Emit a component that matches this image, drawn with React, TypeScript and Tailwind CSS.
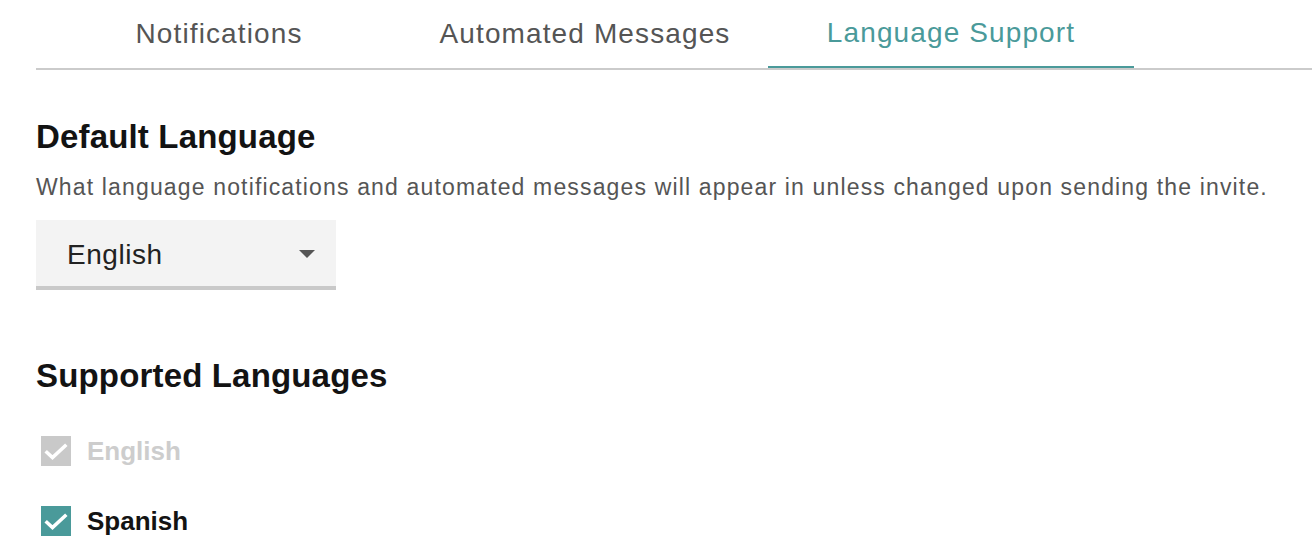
const tabs = ["Notifications", "Automated Messages", "Language Support"];

function Check({ disabled }: { disabled?: boolean }) {
  return (
    <span
      className={`flex h-[30px] w-[30px] shrink-0 ${
        disabled ? "bg-[#c9c9c9]" : "bg-[#4a9a9a]"
      }`}
    >
      <svg width="30" height="30" viewBox="0 0 30 30" fill="none">
        <path
          d="M6 16.5 L11.5 21.5 L24 10"
          stroke="#fff"
          strokeWidth="3.6"
          strokeLinecap="square"
        />
      </svg>
    </span>
  );
}

export default function App() {
  return (
    <div className="min-h-[554px] w-full bg-white font-['Liberation_Sans',Arial,sans-serif]">
      {/* tab bar */}
      <div className="ml-[36px] flex h-[70px] border-b-2 border-[#cbcbcb]">
        {tabs.map((t, i) => (
          <div
            key={t}
            className={`flex h-[68px] w-[366px] items-center justify-center pb-[1px] text-[28px] tracking-[0.04em] ${
              i === 2
                ? "border-b-2 border-[#4a9a9a] text-[#4a9a9a]"
                : "text-[#555]"
            }`}
          >
            {t}
          </div>
        ))}
      </div>

      <div className="px-[36px]">
        <h2 className="mt-[47px] text-[33px] font-bold leading-[40px] tracking-[0.005em] text-[#131313]">
          Default Language
        </h2>
        <p className="mt-[17px] text-[23px] leading-[26px] tracking-[1.15px] text-[#555]">
          What language notifications and automated messages will appear in unless changed upon sending the invite.
        </p>

        {/* select */}
        <div className="mt-[20px] flex h-[70px] w-[300px] items-center justify-between border-b-4 border-[#c9c9c9] bg-[#f3f3f3] pl-[31px] pr-[21px] pt-[4px]">
          <span className="text-[28px] tracking-[0.02em] text-[#222]">English</span>
          <svg width="16" height="8" viewBox="0 0 16 8" className="-mt-[2px]">
            <path d="M0 0 H16 L8 8 Z" fill="#555" />
          </svg>
        </div>

        <h2 className="mt-[66px] text-[33px] font-bold leading-[40px] tracking-[0.005em] text-[#131313]">
          Supported Languages
        </h2>

        <div className="mt-[35px] flex flex-col gap-[30px] pl-[5px]">
          <label className="flex h-[40px] items-center gap-[16px]">
            <Check disabled />
            <span className="text-[26px] font-bold text-[#cdcdcd]">English</span>
          </label>
          <label className="flex h-[40px] items-center gap-[16px]">
            <Check />
            <span className="text-[26px] font-bold text-[#131313]">Spanish</span>
          </label>
        </div>
      </div>
    </div>
  );
}
